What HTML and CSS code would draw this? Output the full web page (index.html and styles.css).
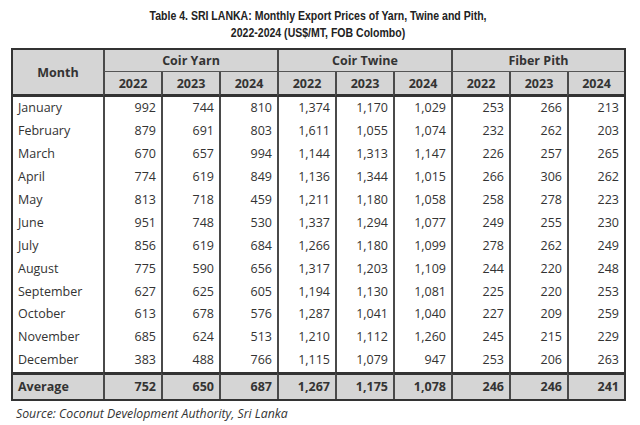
FILE: index.html
```html
<!DOCTYPE html>
<html>
<head>
<meta charset="utf-8">
<link rel="stylesheet" href="styles.css">
</head>
<body>
<div class="page">
  <h1 class="title"><span class="title-text">Table 4. SRI LANKA: Monthly Export Prices of Yarn, Twine and Pith,<br>2022-2024 (US$/MT, FOB Colombo)</span></h1>
  <div class="grid" role="table">
    <div class="row" role="row">
      <div class="cell head month-h first" role="columnheader">Month</div>
      <div class="cell head group" role="columnheader">Coir Yarn</div>
      <div class="cell head group" role="columnheader">Coir Twine</div>
      <div class="cell head group" role="columnheader">Fiber Pith</div>
    </div>
    <div class="row" role="row">
      <div class="cell head year">2022</div><div class="cell head year">2023</div><div class="cell head year">2024</div>
      <div class="cell head year">2022</div><div class="cell head year">2023</div><div class="cell head year">2024</div>
      <div class="cell head year">2022</div><div class="cell head year">2023</div><div class="cell head year">2024</div>
    </div>
    <div class="row"><div class="cell label first">January</div><div class="cell num">992</div><div class="cell num">744</div><div class="cell num">810</div><div class="cell num">1,374</div><div class="cell num">1,170</div><div class="cell num">1,029</div><div class="cell num">253</div><div class="cell num">266</div><div class="cell num">213</div></div>
    <div class="row"><div class="cell label first">February</div><div class="cell num">879</div><div class="cell num">691</div><div class="cell num">803</div><div class="cell num">1,611</div><div class="cell num">1,055</div><div class="cell num">1,074</div><div class="cell num">232</div><div class="cell num">262</div><div class="cell num">203</div></div>
    <div class="row"><div class="cell label first">March</div><div class="cell num">670</div><div class="cell num">657</div><div class="cell num">994</div><div class="cell num">1,144</div><div class="cell num">1,313</div><div class="cell num">1,147</div><div class="cell num">226</div><div class="cell num">257</div><div class="cell num">265</div></div>
    <div class="row"><div class="cell label first">April</div><div class="cell num">774</div><div class="cell num">619</div><div class="cell num">849</div><div class="cell num">1,136</div><div class="cell num">1,344</div><div class="cell num">1,015</div><div class="cell num">266</div><div class="cell num">306</div><div class="cell num">262</div></div>
    <div class="row"><div class="cell label first">May</div><div class="cell num">813</div><div class="cell num">718</div><div class="cell num">459</div><div class="cell num">1,211</div><div class="cell num">1,180</div><div class="cell num">1,058</div><div class="cell num">258</div><div class="cell num">278</div><div class="cell num">223</div></div>
    <div class="row"><div class="cell label first">June</div><div class="cell num">951</div><div class="cell num">748</div><div class="cell num">530</div><div class="cell num">1,337</div><div class="cell num">1,294</div><div class="cell num">1,077</div><div class="cell num">249</div><div class="cell num">255</div><div class="cell num">230</div></div>
    <div class="row"><div class="cell label first">July</div><div class="cell num">856</div><div class="cell num">619</div><div class="cell num">684</div><div class="cell num">1,266</div><div class="cell num">1,180</div><div class="cell num">1,099</div><div class="cell num">278</div><div class="cell num">262</div><div class="cell num">249</div></div>
    <div class="row"><div class="cell label first">August</div><div class="cell num">775</div><div class="cell num">590</div><div class="cell num">656</div><div class="cell num">1,317</div><div class="cell num">1,203</div><div class="cell num">1,109</div><div class="cell num">244</div><div class="cell num">220</div><div class="cell num">248</div></div>
    <div class="row"><div class="cell label first">September</div><div class="cell num">627</div><div class="cell num">625</div><div class="cell num">605</div><div class="cell num">1,194</div><div class="cell num">1,130</div><div class="cell num">1,081</div><div class="cell num">225</div><div class="cell num">220</div><div class="cell num">253</div></div>
    <div class="row"><div class="cell label first">October</div><div class="cell num">613</div><div class="cell num">678</div><div class="cell num">576</div><div class="cell num">1,287</div><div class="cell num">1,041</div><div class="cell num">1,040</div><div class="cell num">227</div><div class="cell num">209</div><div class="cell num">259</div></div>
    <div class="row"><div class="cell label first">November</div><div class="cell num">685</div><div class="cell num">624</div><div class="cell num">513</div><div class="cell num">1,210</div><div class="cell num">1,112</div><div class="cell num">1,260</div><div class="cell num">245</div><div class="cell num">215</div><div class="cell num">229</div></div>
    <div class="row"><div class="cell label first">December</div><div class="cell num">383</div><div class="cell num">488</div><div class="cell num">766</div><div class="cell num">1,115</div><div class="cell num">1,079</div><div class="cell num">947</div><div class="cell num">253</div><div class="cell num">206</div><div class="cell num">263</div></div>
    <div class="row foot"><div class="cell label first">Average</div><div class="cell num">752</div><div class="cell num">650</div><div class="cell num">687</div><div class="cell num">1,267</div><div class="cell num">1,175</div><div class="cell num">1,078</div><div class="cell num">246</div><div class="cell num">246</div><div class="cell num">241</div></div>
  </div>
  <p class="source">Source: Coconut Development Authority, Sri Lanka</p>
</div>
</body>
</html>
```
FILE: styles.css
```css
html, body {
  margin: 0;
  padding: 0;
  background: #ffffff;
}

.page {
  width: 640px;
  height: 425px;
  padding: 7px 0 0 11px;
  box-sizing: border-box;
  font-family: "Open Sans", "Liberation Sans", sans-serif;
  color: #333333;
  overflow: hidden;
}

.title {
  margin: 0 0 7px 0;
  width: 615px;
  text-align: center;
  font-family: "Liberation Sans", sans-serif;
  font-weight: bold;
  font-size: 13px;
  line-height: 17px;
  color: #222222;
}

.title-text {
  display: inline-block;
  transform: scaleX(0.81);
  transform-origin: center;
}

.grid {
  display: grid;
  width: 615px;
  box-sizing: border-box;
  grid-template-columns: 90px repeat(8, 58px) 1fr;
  grid-template-rows: 22px 25px repeat(12, 22.9px) 27px;
  border: 2px solid #333333;
  font-size: 12.5px;
}

.row {
  display: contents;
}

.cell {
  box-sizing: border-box;
  display: flex;
  align-items: center;
  border-left: 2px solid #4a4a4a;
  padding: 0 5px 0 6px;
  white-space: nowrap;
  min-width: 0;
}

.cell.first {
  border-left: 0;
}

.head {
  background: #d5d5d5;
  font-weight: bold;
  justify-content: center;
  color: #333333;
  padding: 0;
}

.month-h {
  grid-row: span 2;
  border-bottom: 3px solid #333333;
  padding-top: 1px;
}

.group {
  grid-column: span 3;
  border-bottom: 1px solid #555555;
}

.year {
  border-bottom: 3px solid #333333;
}

.label {
  justify-content: flex-start;
  padding-left: 5px;
  padding-bottom: 1px;
}

.num {
  justify-content: flex-end;
  padding-bottom: 1px;
}

.foot .cell {
  background: #d5d5d5;
  border-top: 3px solid #333333;
  font-weight: bold;
  padding-bottom: 0;
}

.source {
  margin: 5px 0 0 5px;
  font-style: italic;
  font-size: 12.3px;
  line-height: 16px;
  color: #333333;
}
```
